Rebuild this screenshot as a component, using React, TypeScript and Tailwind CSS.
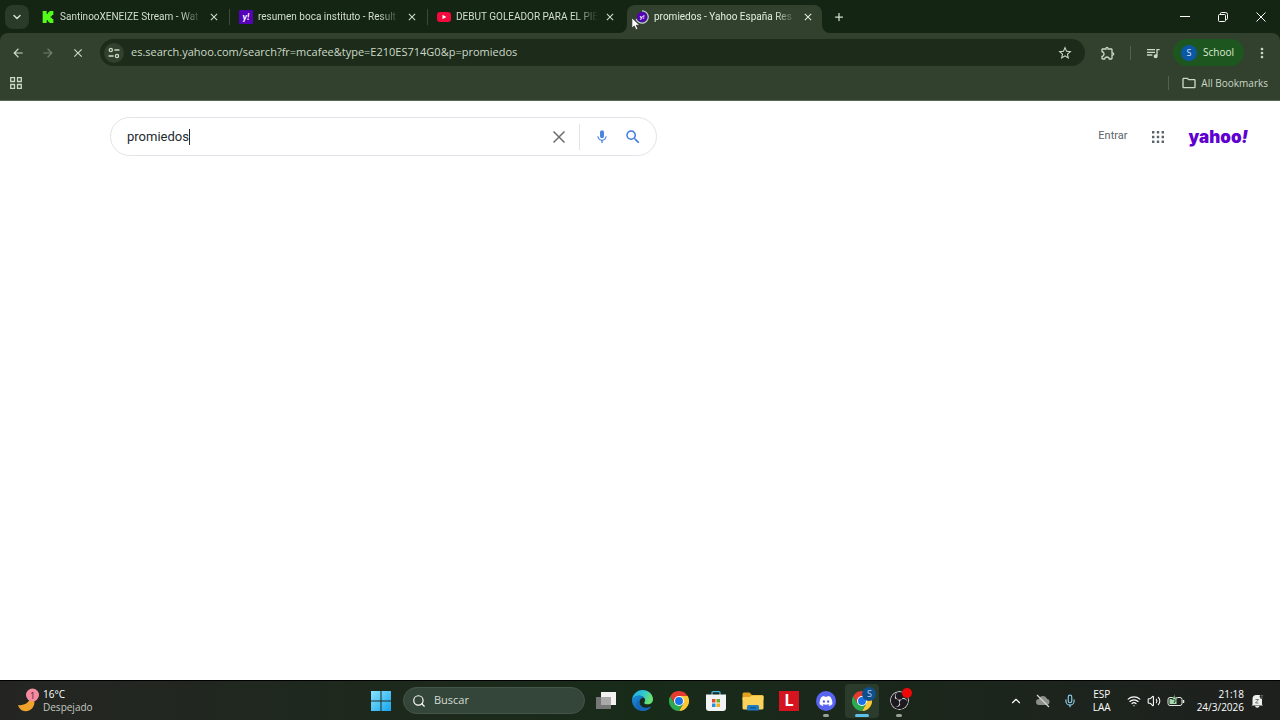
import { useState, type ReactNode } from "react";
import { clsx } from "clsx";
import {
    MdArrowBack,
    MdArrowForward,
    MdClose,
    MdMic,
    MdMoreVert,
    MdOutlineExtension,
    MdOutlineFolder,
    MdQueueMusic,
    MdSearch,
    MdStarOutline,
} from "react-icons/md";
import { SiKick, SiObsstudio } from "react-icons/si";
import { FaDiscord } from "react-icons/fa";
import { ChevronDown, ChevronUp, Mic, Plus, Search, Volume2, Wifi } from "lucide-react";

type Tab = {
    title: string;
    icon: ReactNode;
};

const TABS: Tab[] = [
    { title: "SantinooXENEIZE Stream - Wat", icon: <SiKick className="size-3 text-[#53fc18]" /> },
    { title: "resumen boca instituto - Result", icon: <YahooFavicon /> },
    { title: "DEBUT GOLEADOR PARA EL PIE", icon: <YoutubeFavicon /> },
    { title: "promiedos - Yahoo España Res", icon: <LoadingFavicon /> },
];

export default function App() {
    return (
        <div className="flex h-dvh flex-col overflow-hidden bg-white font-['Open_Sans',sans-serif] select-none">
            <TabStrip />
            <Toolbar />
            <SearchPage />
            <Taskbar />
        </div>
    );
}

function TabStrip() {
    const [active, setActive] = useState(3);

    return (
        <header className="flex h-[33px] shrink-0 items-center bg-[#152514] text-[#d3dfce]">
            <button
                aria-label="Search tabs"
                className="ml-[5px] flex size-6 items-center justify-center rounded-lg bg-[#2b3b29]"
            >
                <ChevronDown className="size-3" strokeWidth={3} />
            </button>

            <div className="ml-1 flex min-w-0 gap-[3px] self-stretch">
                {TABS.map((tab, i) => (
                    <div
                        key={tab.title}
                        className={clsx(
                            "relative mt-[5px] flex w-[195px] min-w-0 items-center rounded-t-lg pr-2 pb-1 pl-2",
                            i === active && "bg-[#31412e] text-[#e4eee0]"
                        )}
                    >
                        {i === active && <TabFeet />}
                        <button
                            onClick={() => setActive(i)}
                            className="flex min-w-0 flex-1 items-center gap-[5px] text-left"
                        >
                            <span className="flex size-3.5 shrink-0 items-center justify-center">{tab.icon}</span>
                            <span className="min-w-0 flex-1 overflow-hidden mask-r-from-85% font-['Roboto',sans-serif] text-[10px] leading-4 whitespace-nowrap">
                                {tab.title}
                            </span>
                        </button>
                        <button aria-label={`Close ${tab.title}`} className="ml-1.5 shrink-0">
                            <MdClose className="size-3" />
                        </button>
                        {i < active - 1 && <span className="absolute -right-0.5 h-4 w-px bg-[#3b4b38]" />}
                    </div>
                ))}
            </div>

            <button aria-label="New tab" className="ml-[7px] flex size-5 items-center justify-center">
                <Plus className="size-3" strokeWidth={2.5} />
            </button>

            <div className="ml-auto flex text-white">
                <button aria-label="Minimize" className="flex h-8 w-[38px] items-center justify-center">
                    <svg viewBox="0 0 10 10" className="size-2.5" stroke="currentColor">
                        <path d="M0 4.5h10" />
                    </svg>
                </button>
                <button aria-label="Restore" className="flex h-8 w-[38px] items-center justify-center">
                    <svg viewBox="0 0 10 10" className="size-2.5" fill="none" stroke="currentColor">
                        <rect x=".5" y="2.5" width="7" height="7" rx="1" />
                        <path d="M2.5 2.5V1.5q0-1 1-1h4q2 0 2 2v4q0 1-1 1h-1" />
                    </svg>
                </button>
                <button aria-label="Close" className="flex h-8 w-[38px] items-center justify-center">
                    <svg viewBox="0 0 10 10" className="size-2.5" stroke="currentColor">
                        <path d="M.5.5l9 9M9.5.5l-9 9" />
                    </svg>
                </button>
            </div>
        </header>
    );
}

function TabFeet() {
    return (
        <>
            <svg viewBox="0 0 8 8" className="absolute bottom-0 -left-2 size-2" fill="#31412e">
                <path d="M8 0v8H0a8 8 0 0 0 8-8z" />
            </svg>
            <svg viewBox="0 0 8 8" className="absolute -right-2 bottom-0 size-2" fill="#31412e">
                <path d="M0 0v8h8a8 8 0 0 1-8-8z" />
            </svg>
            {/* mouse pointer */}
            <svg viewBox="0 0 12 17" className="absolute top-3 left-1 z-10 h-3.5 w-2.5">
                <path
                    d="M1 1v12.5l3-2.7 2 4.7 2.3-1-2-4.5h4.2z"
                    fill="#fff"
                    stroke="#222"
                    strokeWidth=".8"
                />
            </svg>
        </>
    );
}

function Toolbar() {
    const [url, setUrl] = useState("es.search.yahoo.com/search?fr=mcafee&type=E210ES714G0&p=promiedos");

    return (
        <div className="shrink-0 bg-[#152514]">
            <div className="rounded-t-lg border-b border-[#5b6858] bg-[#31412e] text-[#cbd8c5]">
                <div className="flex items-center pt-1.5 pr-2.5">
                    <div className="flex w-[100px] items-center gap-4 pl-[11px]">
                        <button aria-label="Back">
                            <MdArrowBack className="size-3.5" />
                        </button>
                        <button aria-label="Forward" className="text-[#73816f]">
                            <MdArrowForward className="size-3.5" />
                        </button>
                        <button aria-label="Stop">
                            <MdClose className="size-3.5" />
                        </button>
                    </div>

                    <div className="flex h-[27px] flex-1 items-center rounded-full bg-[#1c2b1a] pr-3 pl-1">
                        <button
                            aria-label="Site information"
                            className="flex size-5 items-center justify-center rounded-full bg-[#31412e]"
                        >
                            <svg
                                viewBox="0 0 12 12"
                                className="size-3"
                                fill="none"
                                stroke="currentColor"
                                strokeWidth="1.3"
                                strokeLinecap="round"
                            >
                                <circle cx="2.8" cy="3" r="1.6" />
                                <path d="M6.8 3H11M1 9h4.2" />
                                <circle cx="9" cy="9" r="1.6" />
                            </svg>
                        </button>
                        <input
                            aria-label="Address"
                            value={url}
                            onChange={(e) => setUrl(e.target.value)}
                            className="ml-[7px] min-w-0 flex-1 bg-transparent text-[11px] text-[#cddac8] outline-none"
                        />
                        <button aria-label="Bookmark this page">
                            <MdStarOutline className="size-4" />
                        </button>
                    </div>

                    <button aria-label="Extensions" className="ml-[15px]">
                        <MdOutlineExtension className="size-4" />
                    </button>
                    <span className="ml-3.5 h-3.5 w-px bg-[#51614d]" />
                    <button aria-label="Media controls" className="ml-3.5">
                        <MdQueueMusic className="size-4" />
                    </button>
                    <button className="ml-3 flex h-[27px] items-center gap-1.5 rounded-full bg-[#1d561e] pr-2.5 pl-2 text-[10px] text-[#dcecd6]">
                        <span className="flex size-4 items-center justify-center rounded-full bg-[#0b57a4] text-[9px] text-[#d3e5fa]">
                            S
                        </span>
                        School
                    </button>
                    <button aria-label="Menu" className="ml-2.5">
                        <MdMoreVert className="size-4" />
                    </button>
                </div>

                <div className="flex h-[34px] items-center pr-3 pl-2.5">
                    <button aria-label="Apps">
                        <svg
                            viewBox="0 0 12 12"
                            className="size-3"
                            fill="none"
                            stroke="currentColor"
                            strokeWidth="1.3"
                        >
                            <path d="M.7.7h3.8v3.8H.7zM7.5.7h3.8v3.8H7.5zM.7 7.5h3.8v3.8H.7zM7.5 7.5h3.8v3.8H7.5z" />
                        </svg>
                    </button>
                    <span className="ml-auto h-3.5 w-px bg-[#51614d]" />
                    <button className="ml-3 flex items-center gap-1 text-[10px] whitespace-nowrap">
                        <MdOutlineFolder className="size-4" />
                        All Bookmarks
                    </button>
                </div>
            </div>
        </div>
    );
}

function SearchPage() {
    const [query, setQuery] = useState("promiedos");

    return (
        <main className="flex-1 overflow-auto bg-white">
            <div className="flex items-center pt-4 pr-8 pl-[110px]">
                <form
                    onSubmit={(e) => e.preventDefault()}
                    className="flex h-[39px] w-full max-w-[547px] items-center rounded-full border border-[#e0e4e9] pr-3.5 pl-4"
                >
                    {/* the field hugs its text so that the caret follows it */}
                    <label className="flex min-w-0 flex-1 items-center">
                        <input
                            aria-label="Search"
                            value={query}
                            onChange={(e) => setQuery(e.target.value)}
                            className="field-sizing-content min-w-0 bg-transparent font-['Roboto',sans-serif] text-[13px] text-[#232a31] outline-none"
                        />
                        <span className="h-4 w-px bg-[#232a31]" />
                    </label>
                    <button type="button" aria-label="Clear" onClick={() => setQuery("")}>
                        <svg viewBox="0 0 12 12" className="size-3" stroke="#6a6d70" strokeWidth="1.5">
                            <path d="M.5.5l11 11M11.5.5l-11 11" />
                        </svg>
                    </button>
                    <span className="mx-3.5 h-[26px] w-px bg-[#e0e4e9]" />
                    <button type="button" aria-label="Search by voice">
                        <MdMic className="size-4 text-[#4a86e0]" />
                    </button>
                    <button aria-label="Submit search" className="ml-3.5">
                        <MdSearch className="size-[18px] text-[#3d7be0]" stroke="currentColor" />
                    </button>
                </form>

                <nav className="ml-auto flex items-center">
                    <a href="#login" className="font-['Roboto',sans-serif] text-[11px] text-[#5b636a]">
                        Entrar
                    </a>
                    <button aria-label="Yahoo apps" className="ml-6">
                        <svg viewBox="0 0 12 12" className="size-3" fill="#5b636a">
                            <path d="M0 0h2.400v2.400H0zM4.800 0h2.400v2.400H4.800zM9.600 0H12v2.400H9.600zM0 4.800h2.400v2.400H0zM4.800 4.800h2.400v2.400H4.800zM9.600 4.800H12v2.400H9.600zM0 9.600h2.400V12H0zM4.800 9.600h2.400V12H4.800zM9.600 9.600H12V12H9.600z" />
                        </svg>
                    </button>
                    <a
                        href="#yahoo"
                        className="ml-[25px] font-['Inter',sans-serif] text-[17px] leading-6 font-black text-[#5f01d1]"
                    >
                        yahoo<span className="italic">!</span>
                    </a>
                </nav>
            </div>
        </main>
    );
}

function Taskbar() {
    return (
        <footer className="flex h-10 shrink-0 items-stretch border-t border-black bg-linear-to-r from-[#242522] via-[#182b19] to-[#1e201e] text-white">
            <div className="flex flex-1 items-center">
                <button className="ml-[17px] flex items-center gap-0.5 text-left text-[10px] leading-[13px]">
                    <svg viewBox="0 0 24 26" className="h-[26px] w-6">
                        <path d="M1 17c5 1 12-2 13-9 6 3 4 14-4 15-4 1-8-2-9-6z" fill="#f0a32c" />
                        <circle cx="15.500" cy="7" r="6.500" fill="#f58ba0" />
                        <text x="15.500" y="10.500" fontSize="9" textAnchor="middle" fill="#4a1622">
                            1
                        </text>
                    </svg>
                    <span>
                        16°C
                        <span className="block text-[#c4c8c2]">Despejado</span>
                    </span>
                </button>
            </div>

            <div className="flex items-center">
                <TaskButton label="Inicio">
                    <WindowsLogo />
                </TaskButton>
                <label className="ml-[5px] flex h-[27px] w-[182px] items-center gap-2 rounded-full border border-[#44564a] bg-[#344639] px-2">
                    <Search className="size-3.5 shrink-0" strokeWidth={2} />
                    <input
                        aria-label="Buscar"
                        placeholder="Buscar"
                        className="min-w-0 flex-1 bg-transparent text-[11px] outline-none placeholder:text-[#d3dcd4]"
                    />
                </label>
                <div className="ml-1 flex w-[327px] justify-between">
                    <TaskButton label="Vista de tareas">
                        <svg viewBox="0 0 20 20" className="size-5">
                            <rect x="5" y="1" width="15" height="13" fill="#f2f2f2" />
                            <rect y="6" width="15" height="12" fill="#777" />
                            <rect x="5" y="6" width="10" height="8" fill="#aaa" />
                        </svg>
                    </TaskButton>
                    <TaskButton label="Edge">
                        <EdgeLogo />
                    </TaskButton>
                    <TaskButton label="Chrome">
                        <ChromeLogo />
                    </TaskButton>
                    <TaskButton label="Microsoft Store">
                        <StoreLogo />
                    </TaskButton>
                    <TaskButton label="Explorador de archivos">
                        <ExplorerLogo />
                    </TaskButton>
                    <TaskButton label="L">
                        <span className="flex size-5 items-center justify-center bg-[#d5141f] font-['Roboto',sans-serif] text-base leading-5 font-bold">
                            L
                        </span>
                    </TaskButton>
                    <TaskButton label="Discord" running>
                        <span className="flex size-5 items-center justify-center rounded-full bg-[#5865f2]">
                            <FaDiscord className="size-3.5" />
                        </span>
                    </TaskButton>
                    <TaskButton label="Chrome (School)" focused>
                        <ChromeLogo />
                        <span className="absolute top-[3px] right-[3px] flex size-3.5 items-center justify-center rounded-full bg-[#0f4f8c] text-[9px] text-[#b9d6ee]">
                            S
                        </span>
                    </TaskButton>
                    <TaskButton label="OBS Studio" running>
                        <SiObsstudio className="size-[19px] rounded-full bg-[#1c1a1e] text-[#d9d6da]" />
                        <span className="absolute top-1 right-1 size-2.5 rounded-full bg-[#f00808]" />
                    </TaskButton>
                </div>
            </div>

            <div className="flex flex-1 items-center justify-end text-[10px] leading-[13px]">
                <button aria-label="Mostrar iconos ocultos">
                    <ChevronUp className="size-3.5" strokeWidth={2} />
                </button>
                <svg viewBox="0 0 16 14" className="ml-3 h-3.5 w-4">
                    <path d="M4 11a3 3 0 0 1 0-6 4.200 4.200 0 0 1 8-.3 3.200 3.200 0 0 1 0 6.300z" fill="#8b908a" />
                    <path d="M2 1l12 12" stroke="#d4d8d3" strokeWidth="1.200" />
                </svg>
                <Mic className="ml-3 size-3.5 text-[#8ecbe8]" strokeWidth={2} />
                <span className="ml-4 text-center">
                    ESP
                    <br />
                    LAA
                </span>
                <button aria-label="Red, volumen y batería" className="ml-4 flex items-center gap-1.5">
                    <Wifi className="size-3.5" strokeWidth={2} />
                    <Volume2 className="size-3.5" strokeWidth={1.8} />
                    <svg viewBox="0 0 18 14" className="h-3.5 w-[18px]" fill="none" stroke="#e6ebe4">
                        <rect x="1" y="3.500" width="14" height="8" rx="2" />
                        <path d="M16.500 6v3" strokeWidth="1.500" />
                        <rect x="2.500" y="5" width="7" height="5" fill="#a5d9ae" stroke="none" />
                        <path d="M8 0L5 5.500h3L7 9l4-5H8z" fill="#a5d9ae" stroke="#1d281d" strokeWidth=".6" />
                    </svg>
                </button>
                <button className="ml-3 text-right">
                    21:18
                    <br />
                    24/3/2026
                </button>
                <button aria-label="Notificaciones" className="mr-4 ml-1.5">
                    <svg viewBox="0 0 14 14" className="size-3.5" fill="#edf0ec">
                        <path d="M2.500 10.500V5a4 4 0 0 1 4-4h3.500a3 3 0 0 0 2 4v5.500l1 1H1.500zM5 12h4.500a2.300 2.300 0 0 1-4.500 0z" />
                        <path d="M5.500 5.500h3l-3 3.500h3M10.500 1.500h2.200l-2.200 2.600h2.200" fill="none" stroke="#65706a" strokeWidth=".9" />
                    </svg>
                </button>
            </div>
        </footer>
    );
}

function TaskButton({
    label,
    running,
    focused,
    children,
}: {
    label: string;
    running?: boolean;
    focused?: boolean;
    children: ReactNode;
}) {
    return (
        <button
            aria-label={label}
            className={clsx("relative flex h-[34px] w-[34px] items-center justify-center rounded", focused && "bg-[#2b3c2c]")}
        >
            {children}
            {running && <span className="absolute bottom-px h-[3px] w-1.5 rounded-full bg-[#98a097]" />}
            {focused && <span className="absolute bottom-px h-[3px] w-3.5 rounded-full bg-[#5cc0ea]" />}
        </button>
    );
}

function YahooFavicon() {
    return (
        <svg viewBox="0 0 14 14" className="size-3.5">
            <rect width="14" height="14" rx="1" fill="#5401b8" />
            <text x="7" y="9.500" fontSize="9" fontWeight="900" fontStyle="italic" fontFamily="Lato" textAnchor="middle" fill="#fff">
                y!
            </text>
        </svg>
    );
}

function YoutubeFavicon() {
    return (
        <svg viewBox="0 0 14 10" className="h-2.5 w-3.5">
            <rect width="14" height="10" rx="3" fill="#f5083c" />
            <path d="M5.500 2.800v4.400L9.300 5z" fill="#fff" />
        </svg>
    );
}

function LoadingFavicon() {
    return (
        <svg viewBox="0 0 14 14" className="size-3.5">
            <circle cx="7" cy="7" r="5" fill="#5401b8" />
            <path d="M7 .8a6.200 6.200 0 1 1-5.900 8" fill="none" stroke="#c5cfe6" strokeWidth="1.200" />
            <text x="7" y="8.800" fontSize="6" fontWeight="900" fontStyle="italic" fontFamily="Lato" textAnchor="middle" fill="#fff">
                y!
            </text>
        </svg>
    );
}

function WindowsLogo() {
    return (
        <svg viewBox="0 0 20 20" className="size-5">
            <defs>
                <linearGradient id="win" x1="0" y1="0" x2="1" y2="1">
                    <stop offset="0" stopColor="#8be4fc" />
                    <stop offset="1" stopColor="#14a4ee" />
                </linearGradient>
            </defs>
            <path d="M0 0h9.500v9.500H0zM10.500 0H20v9.500h-9.500zM0 10.500h9.500V20H0zM10.500 10.500H20V20h-9.500z" fill="url(#win)" />
        </svg>
    );
}

function ChromeLogo() {
    return (
        <svg viewBox="0 0 48 48" className="size-5">
            <path d="M24 12h20.800A24 24 0 0 1 24 48l10.400-18z" fill="#fcc934" />
            <path d="M34.400 30L24 48A24 24 0 0 1 3.200 12l10.400 18z" fill="#2da94f" />
            <path d="M13.600 30L3.200 12A24 24 0 0 1 44.800 12H24z" fill="#e33b2e" />
            <circle cx="24" cy="24" r="12" fill="#fff" />
            <circle cx="24" cy="24" r="9.500" fill="#1a73e8" />
        </svg>
    );
}

function EdgeLogo() {
    return (
        <svg viewBox="0 0 24 24" className="size-[21px]">
            <defs>
                <linearGradient id="edgeTop" x1="0" y1="0" x2="1" y2=".3">
                    <stop offset="0" stopColor="#22a4e2" />
                    <stop offset=".55" stopColor="#2fc6d8" />
                    <stop offset="1" stopColor="#6ae36d" />
                </linearGradient>
                <linearGradient id="edgeBottom" x1="0" y1="0" x2="1" y2="1">
                    <stop offset="0" stopColor="#1a8ee0" />
                    <stop offset="1" stopColor="#0b4a92" />
                </linearGradient>
            </defs>
            <path d="M0 11.500C.5 5 5.500 0 12 0c7 0 12 5 12 10.500 0 3.500-2.700 5.900-6 5.900-2.600 0-4-.9-4-1.900 0-.7 1-1.200 1-3C15 9 12 6.500 8.500 6.500 4.500 6.500 1 8.500 0 11.500z" fill="url(#edgeTop)" />
            <path d="M0 12c.5-3.500 4-5.500 8.500-5.500 2.500 0 4.500 1 5.500 2.400-3-.6-5.500 1.700-5.500 4.900 0 4.200 4 7 8.300 6.700 2-.1 3.900-1 5-1.800A12 12 0 0 1 12 24C5.400 24 0 18.600 0 12z" fill="url(#edgeBottom)" />
            <path d="M9.500 11c-1 1.200-1 2.800-.8 4 .8 4.500 6.500 6.500 11 4.800 1.300-.5 2-1 2.300-.7-2 3-5.500 4.900-10 4.900-4-1-6.500-4-6.500-7.500 0-2.500 1.500-4.500 4-5.500z" fill="#1767b8" />
        </svg>
    );
}

function StoreLogo() {
    return (
        <svg viewBox="0 0 20 20" className="size-5">
            <path d="M6 4V2q0-1.300 1.300-1.300h5.400Q14 .7 14 2v2" fill="none" stroke="#45b4e8" strokeWidth="1.300" />
            <path d="M0 3.500h20V17q0 3-3 3H3q-3 0-3-3z" fill="#f2f3f4" />
            <path d="M6 8h3.500v3.500H6z" fill="#e34a2b" />
            <path d="M10.500 8H14v3.500h-3.500z" fill="#6cab27" />
            <path d="M6 12.500h3.500V16H6z" fill="#2a90dd" />
            <path d="M10.500 12.500H14V16h-3.500z" fill="#eeb01c" />
        </svg>
    );
}

function ExplorerLogo() {
    return (
        <svg viewBox="0 0 22 20" className="h-5 w-[22px]">
            <path d="M.5 3q0-1.500 1.500-1.500h5.500L10 4h10q1.500 0 1.500 1.500V9H.5z" fill="#e2a01f" />
            <path d="M.5 7q0-1 1-1h6.200L10 4.500h10.500q1 0 1 1V17q0 1.500-1.500 1.500H2Q.5 18.500.5 17z" fill="#fbd35b" />
            <path d="M5 19.500V15.500q0-1.500 1.500-1.500h9q1.500 0 1.500 1.500v4z" fill="#1d7cc4" />
            <path d="M8 16h6v1.500H8z" fill="#0e5a98" />
        </svg>
    );
}
